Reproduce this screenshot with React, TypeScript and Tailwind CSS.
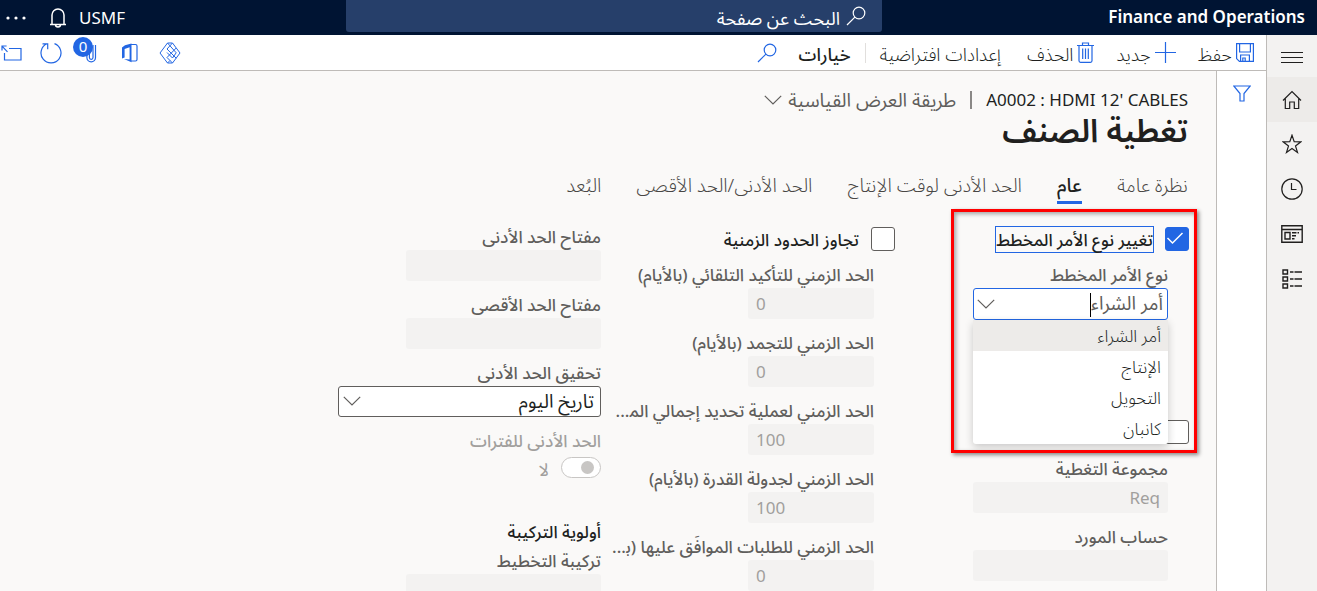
import React, { useState } from "react";

const FONT = "font-['Segoe_UI','Noto_Sans','Noto_Sans_Arabic','DejaVu_Sans',sans-serif]";

type IconProps = { className?: string; w: number; h: number; children: React.ReactNode };

function Icon({ className = "", w, h, children }: IconProps) {
  return (
    <svg
      className={`shrink-0 ${className}`}
      width={w}
      height={h}
      viewBox={`0 0 ${w} ${h}`}
      fill="none"
      stroke="currentColor"
      strokeWidth={1.2}
      aria-hidden="true"
    >
      {children}
    </svg>
  );
}

const Dots = () => (
  <Icon w={20} h={20}>
    <g fill="currentColor" stroke="none">
      <circle cx="2" cy="10" r="1.6" />
      <circle cx="10" cy="10" r="1.6" />
      <circle cx="18" cy="10" r="1.6" />
    </g>
  </Icon>
);
const Bell = () => (
  <Icon w={18} h={20}>
    <path d="M1 16.4h16M3 16.4V7a6 6 0 0 1 12 0v9.400M6.500 16.700a2.500 2.200 0 0 0 5 0" strokeWidth={1.5} />
  </Icon>
);
const Search = ({ className = "" }: { className?: string }) => (
  <Icon w={20} h={20} className={className}>
    <circle cx="13" cy="7" r="5.800" />
    <path d="M8.900 11.100 1 19" />
  </Icon>
);
const Save = () => (
  <Icon w={18} h={19}>
    <path d="M.6 .6h16.800v17.800H3.400L.6 15.600zM3.600 .6v8.400h10.800V.6M4.600 18.400v-6.400h8.800v6.400M6.800 18.400v-3.400h2.400v3.400" />
  </Icon>
);
const Plus = () => (
  <Icon w={21} h={21}>
    <path d="M10.500 0v21M0 10.500h21" />
  </Icon>
);
const Trash = () => (
  <Icon w={17} h={21}>
    <path d="M0 3.500h17M5.500 3.500V1h6v2.500M2 3.500v15.300q0 1.500 1.500 1.500h10q1.500 0 1.500-1.500V3.500M5.700 6.500v10.500M8.500 6.500v10.500M11.300 6.500v10.500" />
  </Icon>
);
const Diamonds = () => (
  <Icon w={22} h={22}>
    <path d="M8.500 1 1 11l7.500 10h5L21 11 13.500 1zM8.500 1l8.700 9.800L13.500 16 8 10.500M13.500 1 8 7l9.200 9.200M17.200 6 8 15.500l5.500 5.500M8.500 21l2.500-2.500" strokeWidth={1} />
  </Icon>
);
const Office = () => (
  <Icon w={17} h={20}>
    <path d="M10 1.500h4.500q1.500 0 1.500 1.500v13.500q0 1.500-1.500 1.500H10" />
    <path d="M10.500 .5 4 2.300 1 4.600v10.800l2.600-1V5.900l5-1.600v12.300l-5.600-.6L10.500 19.200z" fill="currentColor" stroke="none" />
  </Icon>
);
const Clip = () => (
  <Icon w={12} h={20}>
    <path d="M10.500 2v12.500a4.300 4.300 0 0 1-8.600 0V5M8 2v12.500a1.800 1.800 0 0 1-3.600 0V6" />
  </Icon>
);
const Refresh = () => (
  <Icon w={22} h={22}>
    <path d="M14.500 1.600A10 10 0 1 1 7 1.800M2.500 1.800h5.200v5.400" />
  </Icon>
);
const PopOut = () => (
  <Icon w={21} h={16}>
    <path d="M8 3.500h12V15H3.500V8M6.500 6.800 1 1.200M1 5.500V1h4.600" />
  </Icon>
);
const Funnel = () => (
  <Icon w={18} h={17}>
    <path d="M.8 1h16.400L11 8.500v7.500H7V8.500z" />
  </Icon>
);
const Chevron = ({ className = "" }: { className?: string }) => (
  <Icon w={18} h={10} className={className}>
    <path d="m.8 .8 8.200 8.200L17.200 .8" />
  </Icon>
);
const Menu = () => (
  <Icon w={22} h={12}>
    <path d="M0 1.500h22M0 6.500h22M0 11.500h22" strokeWidth={1} />
  </Icon>
);
const Home = () => (
  <Icon w={20} h={20}>
    <path d="M1 10.500 10 1.500l9 9M3.300 8.500v10h4.400v-6.500h4.600v6.500h4.400v-10" />
  </Icon>
);
const Star = () => (
  <Icon w={20} h={20}>
    <path d="m10 1.200 2.200 6.500 6.700.1-5.400 4.100 2 6.500L10 14.500l-5.500 3.900 2-6.500L1.100 7.800l6.700-.1z" />
  </Icon>
);
const Clock = () => (
  <Icon w={22} h={22}>
    <circle cx="11" cy="11" r="10.200" />
    <path d="M10.500 5v6.500h5" />
  </Icon>
);
const Workspace = () => (
  <Icon w={22} h={18}>
    <path d="M.8 .8h20.400v16.400H.8zM.8 4.500h20.400M4 7.500h5v6.500H4zM11 7.800h4.500M11 10.800h4M11 13.800h2.500M16.500 7.800h1.500" strokeWidth={1.4} />
  </Icon>
);
const Modules = () => (
  <Icon w={21} h={20}>
    <path d="M1 1h4.500v4H1zM1 8h4.500v4H1zM1 15h4.500v4H1zM8 3h3.500M12.500 3H20M8 10h3.500M12.500 10H20M8 17h3.500M12.500 17H20" strokeWidth={1.4} />
  </Icon>
);

function Action({ label, icon, bold = false }: { label: string; icon?: React.ReactNode; bold?: boolean }) {
  return (
    <button type="button" className="flex items-center gap-1 whitespace-nowrap text-[#201f1e]">
      {icon && <span className="text-[#2266e3]">{icon}</span>}
      <span className={bold ? "pt-1 font-medium" : "pt-1 font-light"}>{label}</span>
    </button>
  );
}

const LABEL = "block h-6 whitespace-nowrap text-[17px] font-medium leading-[22px]";

type FieldProps = { id: string; label: string; value?: string; number?: boolean };

function Field({ id, label, value = "", number = false }: FieldProps) {
  return (
    <div className="flex h-[68px] flex-col items-start">
      <label htmlFor={id} className={`${LABEL} text-[#605e5c]`}>
        {label}
      </label>
      <input
        id={id}
        disabled
        defaultValue={value}
        dir={number ? "ltr" : "rtl"}
        className={`h-[31px] rounded-[3px] bg-[#f3f2f1] px-2 text-[17px] text-[#a19f9d] ${number ? "w-[126px]" : "w-[195px]"}`}
      />
    </div>
  );
}

function Check({ id, label, checked = false, focused = false }: { id: string; label: string; checked?: boolean; focused?: boolean }) {
  const [on, setOn] = useState(checked);
  return (
    <div className="flex h-7 items-center gap-[11px]">
      <span className="relative flex size-6 shrink-0">
        <input
          id={id}
          type="checkbox"
          checked={on}
          onChange={() => setOn(!on)}
          className="size-6 appearance-none rounded-[3px] border border-[#605e5c] bg-white checked:border-[#2266e3] checked:bg-[#2266e3]"
        />
        {on && (
          <svg className="pointer-events-none absolute inset-0 size-6" viewBox="0 0 24 24" fill="none" stroke="#fff" strokeWidth="1.5">
            <path d="m2.500 11 5 5L17.500 6" />
          </svg>
        )}
      </span>
      <label htmlFor={id} className={`whitespace-nowrap border text-[17px] font-medium leading-[25px] text-[#201f1e] ${focused ? "border-[#2266e3]" : "border-transparent"}`}>
        {label}
      </label>
    </div>
  );
}

const TABS = ["نظرة عامة", "عام", "الحد الأدنى لوقت الإنتاج", "الحد الأدنى/الحد الأقصى", "البُعد"];
const ORDER_TYPES = ["أمر الشراء", "الإنتاج", "التحويل", "كانبان"];

function OrderType() {
  return (
    <div className="relative h-[132px] w-[195px]">
      <label htmlFor="order-type" className={`${LABEL} text-[#605e5c]`}>
        نوع الأمر المخطط
      </label>
      <div className="relative">
        <input
          id="order-type"
          role="combobox"
          aria-expanded="true"
          aria-controls="order-type-list"
          defaultValue="أمر الشراء"
          className="h-8 w-full rounded-[3px] border border-[#2266e3] bg-white pr-1 pl-8 text-[19px] text-[#605e5c]"
        />
        <Chevron className="pointer-events-none absolute top-[11px] left-1 text-[#605e5c]" />
        <span className="absolute top-[5px] right-[77px] h-6 w-px bg-black" />
        <ul id="order-type-list" role="listbox" className="absolute top-8 right-0 z-10 w-full rounded-b-[3px] bg-white shadow-[0_3px_8px_rgba(0,0,0,0.2)]">
          {ORDER_TYPES.map((t, i) => (
            <li key={t} role="option" aria-selected={i === 0} className={`h-[31px] px-[7px] text-[17px] font-light leading-[31px] text-[#201f1e] ${i === 0 ? "bg-[#edebe9]" : ""}`}>
              {t}
            </li>
          ))}
        </ul>
      </div>
    </div>
  );
}

export default function App() {
  return (
    <div dir="rtl" lang="ar" className={`flex h-screen flex-col overflow-hidden bg-[#faf9f8] text-[16px] ${FONT}`}>
      <header className="flex h-[35px] shrink-0 items-start bg-[#001433] text-white">
        <div className="w-[435px] shrink-0 px-3 text-[17px] font-semibold leading-[34px]">Finance and Operations</div>
        <label className="flex h-8 flex-1 items-center gap-1.5 rounded-b-[3px] bg-[#263f6a] px-4">
          <Search />
          <input aria-label="البحث عن صفحة" placeholder="البحث عن صفحة" className="min-w-0 flex-1 bg-transparent pt-1 text-[18px] placeholder:text-white" />
        </label>
        <div className="flex h-[35px] w-[346px] shrink-0 items-center justify-end pl-1.5">
          <span className="text-[17px]">USMF</span>
          <button type="button" aria-label="الإعلامات" className="mr-3"><Bell /></button>
          <button type="button" aria-label="المزيد" className="mr-[23px]"><Dots /></button>
        </div>
      </header>

      <div className="flex min-h-0 flex-1">
        <nav className="flex w-[51px] shrink-0 flex-col border-l border-[#bebbb8] bg-[#f3f2f1] text-[#201f1e]">
          <a href="#menu" aria-label="القائمة" className="flex h-[42px] items-center justify-center pt-0.5"><Menu /></a>
          <a href="#home" aria-label="الصفحة الرئيسية" className="flex h-[45px] items-center justify-center bg-[#edebe9]"><Home /></a>
          <a href="#favorites" aria-label="المفضلة" className="flex h-11 items-center justify-center"><Star /></a>
          <a href="#recent" aria-label="الأخيرة" className="flex h-[45px] items-center justify-center"><Clock /></a>
          <a href="#workspaces" aria-label="مساحات العمل" className="flex h-[45px] items-center justify-center"><Workspace /></a>
          <a href="#modules" aria-label="الوحدات" className="flex h-[45px] items-center justify-center"><Modules /></a>
        </nav>

        <div className="flex min-w-0 flex-1 flex-col">
          <div className="flex h-9 shrink-0 items-center justify-between border-b border-[#bebbb8] bg-white text-[18px]">
            <div className="flex items-center pr-3">
              <Action label="حفظ" icon={<Save />} />
              <span className="w-[22px]" />
              <Action label="جديد" icon={<Plus />} />
              <span className="w-[22px]" />
              <Action label="الحذف" icon={<Trash />} />
              <span className="w-[26px]" />
              <Action label="إعدادات افتراضية" />
              <span className="mx-3.5 h-5 w-px bg-[#e1dfdd]" />
              <Action label="خيارات" bold />
              <button type="button" aria-label="بحث" className="mr-[22px] text-[#2266e3]"><Search /></button>
            </div>
            <div className="flex items-center text-[#2266e3]">
              <button type="button" aria-label="Power Apps" className="ml-[21px]"><Diamonds /></button>
              <button type="button" aria-label="Office" className="ml-6"><Office /></button>
              <button type="button" aria-label="المرفقات" className="relative ml-[23px]">
                <Clip />
                <span className="absolute -top-1.5 -left-3 flex size-5 items-center justify-center rounded-full bg-[#2266e3] text-[15px] text-white">0</span>
              </button>
              <button type="button" aria-label="تحديث" className="ml-[18px]"><Refresh /></button>
              <button type="button" aria-label="فتح في نافذة جديدة" className="ml-px"><PopOut /></button>
            </div>
          </div>

          <div className="flex min-h-0 flex-1">
            <aside className="flex w-[50px] shrink-0 items-start justify-center border-l border-[#bebbb8] bg-white pt-3.5 text-[#2266e3]">
              <button type="button" aria-label="تصفية"><Funnel /></button>
            </aside>

            <main className="min-w-0 flex-1 overflow-hidden pt-[17px] pr-7">
              <div className="flex h-6 items-center text-[17px] text-[#201f1e]">
                <span dir="ltr">A0002 : HDMI 12&apos; CABLES</span>
                <span className="mx-3.5 h-[18px] w-0.5 bg-[#8a8886]" />
                <button type="button" className="flex items-center gap-1.5 text-[19px] text-[#605e5c]">
                  طريقة العرض القياسية
                  <Chevron />
                </button>
              </div>
              <h1 className="h-10 text-[32px] font-semibold leading-[36px] text-[#201f1e]">تغطية الصنف</h1>
              <div role="tablist" className="mt-[19px] flex h-[33px] gap-[35px] text-[19px]">
                {TABS.map((t, i) => (
                  <button key={t} type="button" role="tab" aria-selected={i === 1} className={`h-[33px] whitespace-nowrap border-b-[3px] pb-1 ${i === 1 ? "border-[#2266e3] font-medium text-[#201f1e]" : "border-transparent font-light text-[#484644]"}`}>
                    {t}
                  </button>
                ))}
              </div>

              <div className="-mr-px mt-[21px] flex">
                <section className="relative w-[294px] shrink-0">
                  <Check id="change-type" label="تغيير نوع الأمر المخطط" checked focused />
                  <div className="mt-[11px] pr-[21px]"><OrderType /></div>
                  <div className="mt-[22px]"><Check id="override-group" label="" /></div>
                  <div className="mt-3 pr-[21px]">
                    <Field id="group" label="مجموعة التغطية" value="Req" />
                    <Field id="vendor" label="حساب المورد" />
                  </div>
                  <div className="pointer-events-none absolute -top-4 -right-2 z-20 h-[244px] w-[246px] border-[3px] border-[#ff0000] shadow-[2px_2px_4px_rgba(0,0,0,0.45),inset_2px_2px_4px_rgba(0,0,0,0.35)]" />
                </section>

                <section className="w-[294px] shrink-0">
                  <Check id="override-fences" label="تجاوز الحدود الزمنية" />
                  <div className="mt-[11px] pr-[21px]">
                    <Field id="firming" label="الحد الزمني للتأكيد التلقائي (بالأيام)" value="0" number />
                    <Field id="freeze" label="الحد الزمني للتجمد (بالأيام)" value="0" number />
                    <Field id="explosion" label={"الحد الزمني لعملية تحديد إجمالي الم\u200d..."} value="100" number />
                    <Field id="capacity" label="الحد الزمني لجدولة القدرة (بالأيام)" value="100" number />
                    <Field id="approved" label={"الحد الزمني للطلبات الموافَق عليها (ب\u200d..."} value="0" number />
                  </div>
                </section>

                <section className="w-[263px] shrink-0 pt-px">
                  <Field id="min-key" label="مفتاح الحد الأدنى" />
                  <Field id="max-key" label="مفتاح الحد الأقصى" />
                  <div className="flex h-[68px] flex-col">
                    <label htmlFor="fulfil" className={`${LABEL} text-[#605e5c]`}>تحقيق الحد الأدنى</label>
                    <div className="relative">
                      <select id="fulfil" className="h-[31px] w-full appearance-none rounded-[3px] border border-[#605e5c] bg-white px-1.5 text-[19px] text-[#201f1e]">
                        <option>تاريخ اليوم</option>
                      </select>
                      <Chevron className="pointer-events-none absolute top-2.5 left-[5px] text-[#605e5c]" />
                    </div>
                  </div>
                  <div className="h-[87px] text-[#a19f9d]">
                    <label htmlFor="periods" className={LABEL}>الحد الأدنى للفترات</label>
                    <div className="mt-px flex items-center gap-3">
                      <button id="periods" type="button" role="switch" aria-checked="false" disabled className="flex h-[21px] w-10 items-center rounded-full border border-[#c8c6c4] bg-white px-1.5">
                        <span className="size-[13px] rounded-full bg-[#c8c6c4]" />
                      </button>
                      <span className="pt-1 text-[18px] leading-5">لا</span>
                    </div>
                  </div>
                  <h2 className="h-[33px] text-[17px] font-medium leading-[30px] text-[#201f1e]">أولوية التركيبة</h2>
                  <Field id="planning" label="تركيبة التخطيط" />
                </section>
              </div>
            </main>
          </div>
        </div>
      </div>
    </div>
  );
}
